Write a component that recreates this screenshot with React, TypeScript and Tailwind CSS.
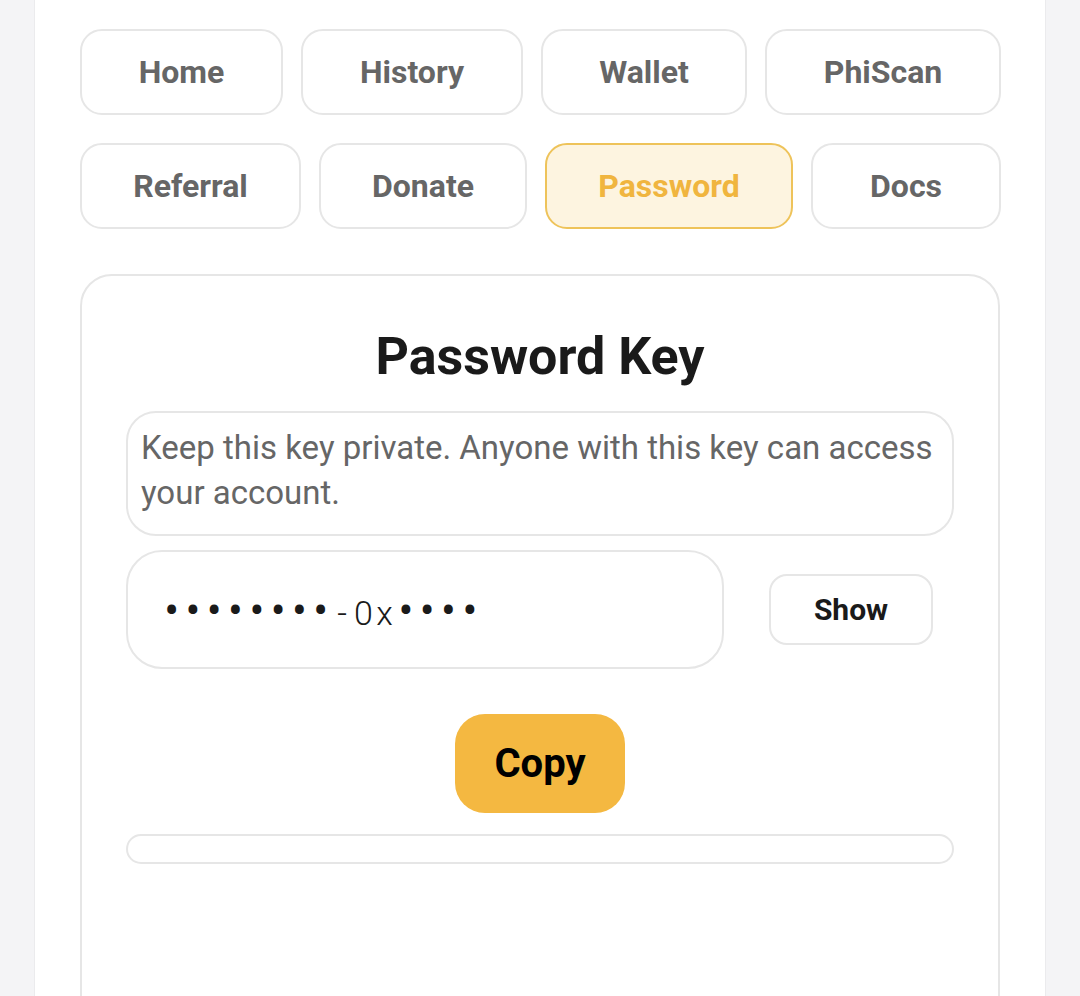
import React from "react";

const row1: [string, string][] = [
  ["Home", "w-[203px]"],
  ["History", "w-[222px]"],
  ["Wallet", "w-[206px]"],
  ["PhiScan", "w-[236px]"],
];
const row2: [string, string][] = [
  ["Referral", "w-[221px]"],
  ["Donate", "w-[208px]"],
  ["Password", "w-[248px]"],
  ["Docs", "w-[190px]"],
];

function NavButton({ label, width, active }: { label: string; width: string; active?: boolean }) {
  return (
    <button
      className={
        width +
        " shrink-0 h-[86px] rounded-[22px] border-2 text-[32px] font-bold " +
        (active
          ? "bg-[#fdf4e0] border-[#eec35a] text-[#f0b53f]"
          : "bg-white border-[#e6e6e6] text-[#666666]")
      }
    >
      {label}
    </button>
  );
}

function MaskedKey() {
  const chars = "••••••••-0x••••".split("");
  return (
    <div className="flex items-center h-[40px] text-[#1a1a1a]">
      {chars.map((c, i) => (
        <span
          key={i}
          className={
            "inline-block w-[21.3px] text-center leading-none " +
            (c === "•" ? "text-[44px] translate-y-[1px]" : "text-[34px] font-light translate-y-[3px]")
          }
        >
          {c}
        </span>
      ))}
    </div>
  );
}

export default function App() {
  return (
    <div
      className="min-h-screen bg-[#f4f4f6] flex justify-center"
      style={{ fontFamily: "Roboto, 'Noto Sans', sans-serif" }}
    >
      <div className="w-[1012px] bg-white border-x border-[#ebebed] px-[45px] pt-[29px] overflow-hidden h-[996px]">
        <div className="flex flex-col gap-[28px]">
          <div className="flex gap-[18px]">
            {row1.map(([l, w]) => (
              <NavButton key={l} label={l} width={w} />
            ))}
          </div>
          <div className="flex gap-[18px]">
            {row2.map(([l, w]) => (
              <NavButton key={l} label={l} width={w} active={l === "Password"} />
            ))}
          </div>
        </div>

        <div className="mt-[45px] border-2 border-[#e6e6e6] rounded-[32px] px-[44px] pt-[48px] pb-[200px]">
          <h1 className="text-center text-[52px] font-bold text-[#1a1a1a] leading-tight">
            Password Key
          </h1>

          <div className="mt-[22px] border-2 border-[#e6e6e6] rounded-[30px] pl-[13px] pr-[13px] pt-[12px] pb-[19px] text-[33px] leading-[45px] text-[#666666]">
            Keep this key private. Anyone with this key can access your account.
          </div>

          <div className="mt-[14px] flex items-center">
            <div className="w-[598px] h-[119px] border-2 border-[#e6e6e6] rounded-[36px] flex items-center pl-[33px]">
              <MaskedKey />
            </div>
            <button className="ml-[45px] w-[164px] h-[71px] border-2 border-[#e6e6e6] rounded-[18px] bg-white text-[30px] font-bold text-[#1a1a1a]">
              Show
            </button>
          </div>

          <div className="mt-[45px] flex justify-center">
            <button className="w-[170px] h-[99px] rounded-[30px] bg-[#f4b841] text-[40px] font-bold text-black">
              Copy
            </button>
          </div>

          <div className="mt-[21px] h-[30px] rounded-full border-2 border-[#e6e6e6]" />
        </div>
      </div>
    </div>
  );
}
